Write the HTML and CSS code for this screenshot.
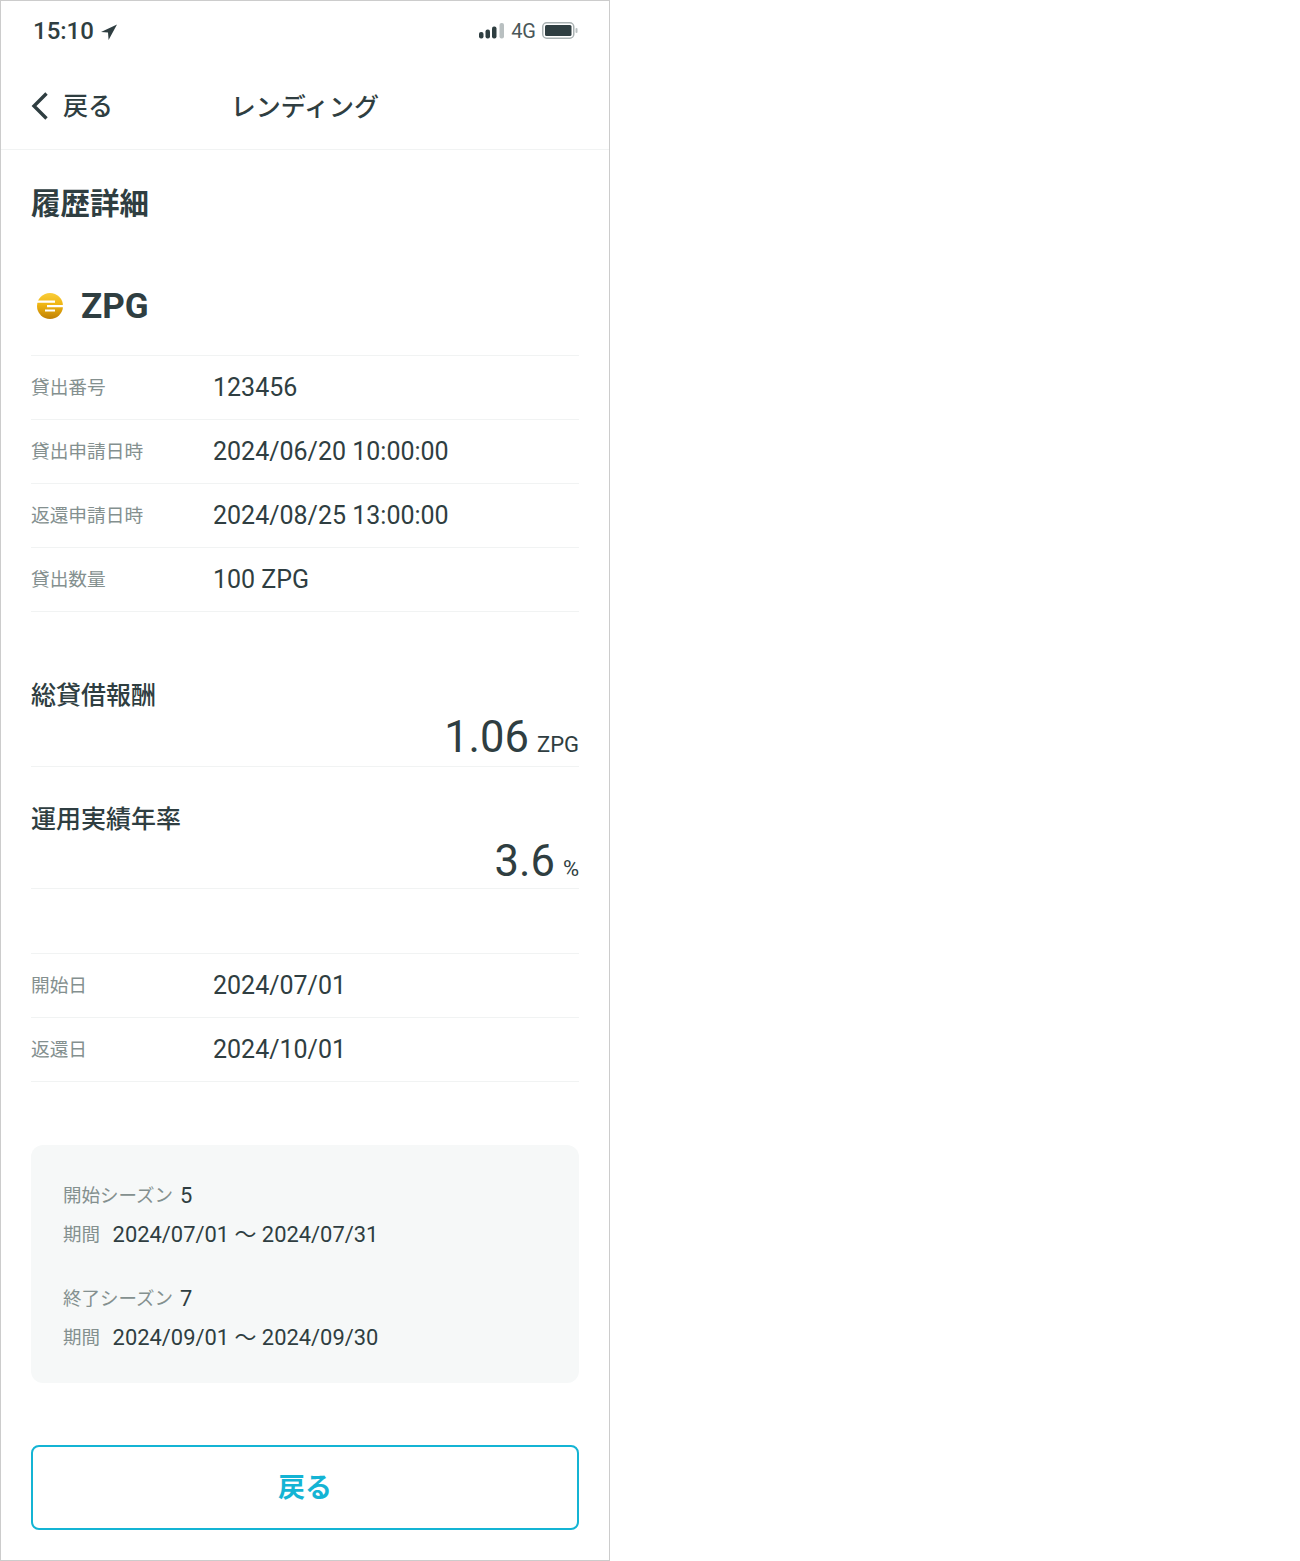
FILE: index.html
```html
<!DOCTYPE html>
<html lang="ja">
<head>
	<meta charset="UTF-8">
	<title>レンディング</title>
	<link rel="stylesheet" href="styles.css">
</head>
<body>
<div class="screen">
	<div class="status">
		<div class="status-left">
			<span class="time">15:10</span>
			<svg class="loc" width="16" height="16" viewBox="0 0 16 16"><path d="M16 0.5 L0 8 L7 8.6 L7.6 16 Z" fill="#2f3e41"/></svg>
		</div>
		<div class="status-right">
			<svg width="25" height="16" viewBox="0 0 25 16">
				<rect x="0" y="9" width="4.5" height="6.5" rx="2" fill="#2f3e41"/>
				<rect x="6.5" y="6.5" width="4.5" height="9" rx="2" fill="#2f3e41"/>
				<rect x="13" y="3.5" width="4.5" height="12" rx="2" fill="#2f3e41"/>
				<rect x="20.5" y="0" width="4.5" height="15.5" rx="2" fill="#b9c0c1"/>
			</svg>
			<span class="net">4G</span>
			<svg width="36" height="18" viewBox="0 0 36 18">
				<rect x="0.75" y="0.75" width="31" height="15.5" rx="4" fill="none" stroke="#a9b1b2" stroke-width="1.5"/>
				<rect x="3" y="3" width="26.5" height="11" rx="1.5" fill="#2f3e41"/>
				<rect x="33.5" y="6" width="2" height="5" rx="1" fill="#b9c0c1"/>
			</svg>
		</div>
	</div>
	<div class="nav">
		<div class="back">
			<svg width="18" height="28" viewBox="0 0 18 28"><path d="M15.5 1.5 L3 14 L15.5 26.5" fill="none" stroke="#2f3e41" stroke-width="3.4"/></svg>
			<span>戻る</span>
		</div>
		<div class="nav-title">レンディング</div>
	</div>
	<div class="content">
		<h1 class="page-title">履歴詳細</h1>
		<div class="coin">
			<svg width="26" height="26" viewBox="0 0 26 26">
				<defs>
					<linearGradient id="coinGrad" x1="0" y1="0" x2="0" y2="1">
						<stop offset="0" stop-color="#f9cd3a"/>
						<stop offset="0.45" stop-color="#efb512"/>
						<stop offset="1" stop-color="#bf8006"/>
					</linearGradient>
				</defs>
				<circle cx="13" cy="13" r="13" fill="url(#coinGrad)"/>
				<path d="M0 7.4 H18 V9.8 H0 Z M10 12 H26 V14.2 H10 Z M8 16.4 H18 V18.4 H8 Z" fill="#fff"/>
			</svg>
			<span>ZPG</span>
		</div>
		<div class="rows">
			<div class="row"><span class="label">貸出番号</span><span class="val">123456</span></div>
			<div class="row"><span class="label">貸出申請日時</span><span class="val">2024/06/20 10:00:00</span></div>
			<div class="row"><span class="label">返還申請日時</span><span class="val">2024/08/25 13:00:00</span></div>
			<div class="row"><span class="label">貸出数量</span><span class="val">100 ZPG</span></div>
		</div>
		<div class="stat stat-first">
			<div class="stat-title">総貸借報酬</div>
			<div class="stat-val"><span class="num">1.06</span><span class="unit">ZPG</span></div>
		</div>
		<div class="stat">
			<div class="stat-title">運用実績年率</div>
			<div class="stat-val"><span class="num">3.6</span><span class="unit">%</span></div>
		</div>
		<div class="rows rows-dates">
			<div class="row"><span class="label">開始日</span><span class="val">2024/07/01</span></div>
			<div class="row"><span class="label">返還日</span><span class="val">2024/10/01</span></div>
		</div>
		<div class="season-box">
			<div class="season-line"><span class="label">開始シーズン</span><span class="season-val">5</span></div>
			<div class="season-line"><span class="label label-period">期間</span><span class="season-val">2024/07/01 〜 2024/07/31</span></div>
			<div class="season-line season-gap"><span class="label">終了シーズン</span><span class="season-val">7</span></div>
			<div class="season-line"><span class="label label-period">期間</span><span class="season-val">2024/09/01 〜 2024/09/30</span></div>
		</div>
		<button class="btn">戻る</button>
	</div>
</div>
</body>
</html>
```

FILE: styles.css
```css
html, body {
  margin: 0;
  padding: 0;
  background: #fff;
}

body {
  font-family: Roboto, "Noto Sans CJK JP", sans-serif;
  color: #2f3e41;
}

.screen {
  width: 610px;
  height: 1561px;
  box-sizing: border-box;
  border: 1px solid #ccc;
}

.status {
  height: 59px;
  padding: 0 31px 0 32px;
  display: flex;
  align-items: center;
  justify-content: space-between;
}
.status-left, .status-right {
  display: flex;
  align-items: center;
}
.time {
  font-size: 24px;
  font-weight: 500;
}
.loc {
  margin-left: 7px;
  margin-top: 3px;
}
.net {
  font-size: 20px;
  margin: 0 6px 0 7px;
  color: #4a5759;
}

.nav {
  position: relative;
  height: 89px;
  padding: 0 30px;
  border-bottom: 1px solid #f1f3f3;
  display: flex;
  align-items: center;
}
.back {
  display: flex;
  align-items: center;
  font-size: 25px;
  font-weight: 500;
}
.back svg {
  margin-top: 2px;
  margin-right: 14px;
}
.back span {
  margin-bottom: 2px;
}
.nav-title {
  position: absolute;
  left: 0;
  right: 0;
  text-align: center;
  font-size: 25px;
  font-weight: 500;
}

.content {
  padding: 0 30px;
}

.page-title {
  margin: 0;
  padding-top: 34px;
  font-size: 29.5px;
  line-height: 40px;
  font-weight: 700;
}

.coin {
  margin-top: 56px;
  height: 52px;
  display: flex;
  align-items: center;
  font-size: 35px;
  font-weight: 700;
  padding-left: 6px;
}
.coin svg {
  margin-right: 18px;
}

.rows {
  margin-top: 23px;
  border-top: 1px solid #f1f3f3;
}
.row {
  height: 63px;
  border-bottom: 1px solid #f1f3f3;
  display: flex;
  line-height: 63px;
}
.label {
  font-size: 18.7px;
  color: #84908f;
}
.row .label {
  width: 182px;
  line-height: 65px;
}
.val {
  font-size: 25px;
}

.stat {
  height: 88px;
  margin-top: 34px;
  border-bottom: 1px solid #f1f3f3;
  box-sizing: border-box;
}
.stat-first {
  margin-top: 66px;
  height: 89px;
}
.stat-title {
  font-size: 25px;
  font-weight: 500;
  line-height: 37px;
}
.stat-first .stat-title {
  line-height: 36px;
}
.stat-val {
  display: flex;
  justify-content: flex-end;
  align-items: baseline;
  line-height: 48px;
}
.num {
  font-size: 43.5px;
}
.unit {
  font-size: 22px;
  margin-left: 8px;
}

.rows-dates {
  margin-top: 64px;
}

.season-box {
  margin-top: 63px;
  height: 238px;
  box-sizing: border-box;
  padding: 31px 32px 0;
  background: #f6f8f8;
  border-radius: 12px;
}
.season-line {
  height: 39px;
  display: flex;
  line-height: 39px;
}
.season-line .label {
  font-size: 18.5px;
  line-height: 40px;
}
.season-gap {
  margin-top: 25px;
}
.season-val {
  font-size: 21.9px;
  margin-left: 7px;
}
.season-line .label-period {
  margin-right: 5.6px;
}

.btn {
  display: block;
  width: 100%;
  height: 85px;
  margin-top: 62px;
  padding: 0 0 4px;
  background: #fff;
  border: 2px solid #14b4d4;
  border-radius: 8px;
  color: #14b4d4;
  font-family: inherit;
  font-size: 27px;
  font-weight: 700;
}
```
